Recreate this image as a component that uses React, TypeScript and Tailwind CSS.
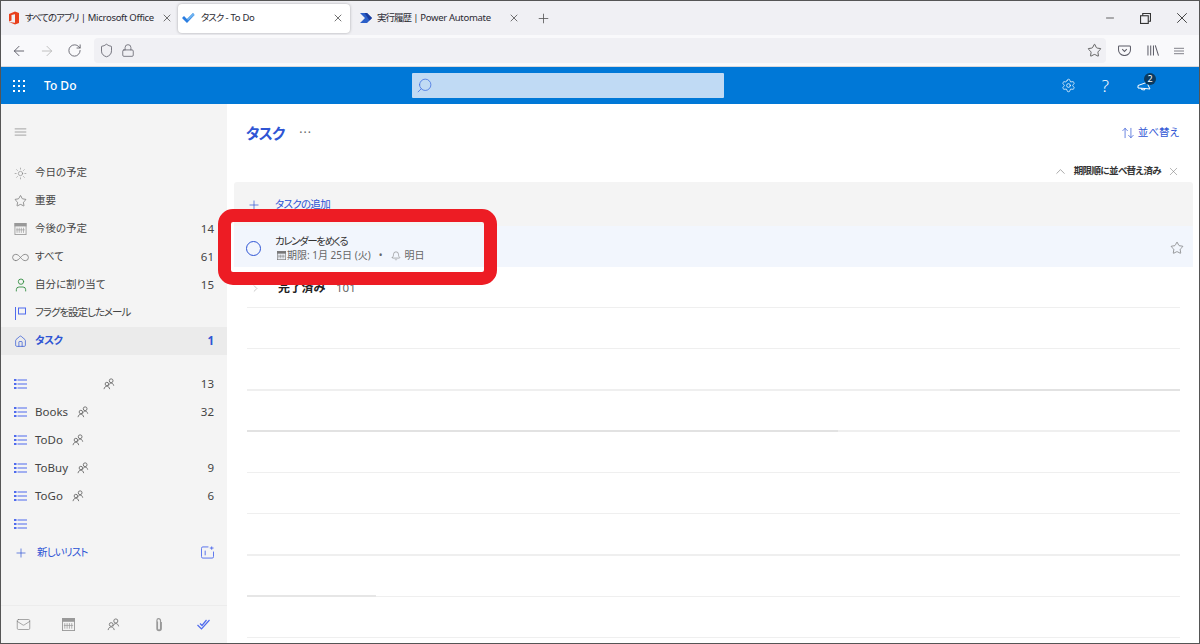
import { ArrowLeft, ArrowRight, RotateCw, Shield, Lock, Star, X, Plus, Minus, Sun, Home, User, Infinity as InfinityIcon, ChevronUp, ChevronRight, Bell, Settings, Mail, Search, ArrowUpDown } from "lucide-react"

const font = "[font-family:'Noto_Sans','Noto_Sans_CJK_JP',sans-serif] [font-feature-settings:'palt']"

function Calendar({ className = "" }: { className?: string }) {
  return (
    <svg viewBox="0 0 14 14" className={className} fill="none" stroke="currentColor">
      <rect x="0.5" y="0.5" width="13" height="13" />
      <rect x="0.5" y="0.5" width="13" height="3" fill="currentColor" />
      <path d="M3 5.5v6M5.5 5.5v6M8 5.5v6M10.5 5.5v6M2 8h10" strokeWidth="0.8" />
    </svg>
  )
}

function People({ className = "" }: { className?: string }) {
  return (
    <svg viewBox="0 0 14 14" className={className} fill="none" stroke="currentColor" strokeWidth="1">
      <circle cx="9.5" cy="3.2" r="2.2" />
      <path d="M6.5 9c.4-2 1.6-3 3-3s2.7 1 3 3" />
      <circle cx="4.5" cy="7" r="2" />
      <path d="M1.2 13c.3-2 1.6-3.4 3.3-3.4S7.5 11 7.8 13" />
    </svg>
  )
}

function Hamburger({ className = "" }: { className?: string }) {
  return (
    <svg viewBox="0 0 13 9" className={className} fill="none" stroke="currentColor">
      <path d="M0 1h13M0 4.5h13M0 8h13" />
    </svg>
  )
}

function ListIcon() {
  return (
    <svg viewBox="0 0 13 10" className="w-[13px] h-[10px] text-[#4f6bed]" stroke="currentColor" fill="currentColor">
      <rect x="0" y="0" width="2.5" height="2" stroke="none" />
      <rect x="0" y="4" width="2.5" height="2" stroke="none" />
      <rect x="0" y="8" width="2.5" height="2" stroke="none" />
      <path d="M3.5 1H13M3.5 5H13M3.5 9H13" strokeWidth="1" />
    </svg>
  )
}

function Tab({ icon, kana, title, active = false, className, textClass }: { icon: React.ReactNode; kana: string; title: string; active?: boolean; className: string; textClass: string }) {
  return (
    <div className={`${className} h-[29px] flex items-center rounded-[4px] ${active ? "bg-white shadow-[0_0_3px_rgba(0,0,0,0.3)]" : ""}`}>
      <span className="w-[14px] h-[14px] flex items-center justify-center shrink-0">{icon}</span>
      <span className={`${textClass} flex-1 text-[9.5px] tracking-[-0.3px] text-[#2b2a33] whitespace-nowrap`}>
        <span className="tracking-[-1px]">{kana}</span> {title}
      </span>
      <X className="w-[12px] h-[12px] text-[#444] shrink-0" strokeWidth={1.5} />
    </div>
  )
}

function NavRow({ icon, label, count, active = false, labelClass = "" }: { icon: React.ReactNode; label: string; count?: string; active?: boolean; labelClass?: string }) {
  return (
    <div className={`h-[28px] flex items-center pl-[13px] pr-[13px] ${active ? "bg-[#ebebeb]" : ""}`}>
      <span className="w-[13px] flex items-center justify-center shrink-0">{icon}</span>
      <span className={`ml-[8px] flex-1 text-[10.5px] whitespace-nowrap ${labelClass} ${active ? "font-bold text-[#2f55d4]" : "text-[#444]"}`}>{label}</span>
      {count && <span className={`text-[11.5px] ${active ? "font-bold text-[#2f55d4]" : "text-[#444]"}`}>{count}</span>}
    </div>
  )
}

function ListRow({ label, count, gap }: { label: string; count?: string; gap: string }) {
  return (
    <div className="h-[28px] flex items-center pl-[13px] pr-[13px]">
      <ListIcon />
      <span className="ml-[8px] text-[11.5px] text-[#444]">{label}</span>
      <People className={`w-[12px] h-[12px] text-[#666] ${gap}`} />
      <span className="flex-1" />
      {count && <span className="text-[11.5px] text-[#444]">{count}</span>}
    </div>
  )
}

function Line({ children }: { children?: React.ReactNode }) {
  return (
    <div className="h-[41.3px] flex items-end">
      {children ?? <span className="flex-1 h-[1.5px] bg-[#efefef]" />}
    </div>
  )
}

export default function App() {
  return (
    <div className={`${font} relative w-[1200px] h-[644px] overflow-hidden flex flex-col bg-white border border-[#555]`}>
      {/* browser tabs */}
      <div className="h-[34px] bg-[#f0f0f4] flex items-center shrink-0">
        <Tab
          className="w-[170px] ml-[6px] pr-[4px]"
          textClass="ml-[4px]"
          kana="すべてのアプリ"
          title="| Microsoft Office"
          icon={
            <svg viewBox="0 0 14 14" className="w-[14px] h-[14px]">
              <path d="M2 3l6-2.5 4 1.5v10l-4 1.5-6-2.5 6 .8V3.2L4.5 4v5.5L2 10.5z" fill="#e8401c" />
            </svg>
          }
        />
        <Tab
          active
          className="w-[172px] ml-[1px] pl-[3px] pr-[6px]"
          textClass="ml-[6px]"
          kana="タスク"
          title="- To Do"
          icon={
            <svg viewBox="0 0 14 14" className="w-[14px] h-[14px]">
              <path d="M1 7l2-2 3 3 6-6 1.5 2L6 12z" fill="#2a7de1" />
              <path d="M6 8l6-6 1.5 2L7 9.5z" fill="#6cb2f0" />
            </svg>
          }
        />
        <Tab
          className="w-[162px] ml-[9px] pr-[1px]"
          textClass="ml-[4px]"
          kana="実行履歴"
          title="| Power Automate"
          icon={
            <svg viewBox="0 0 14 14" className="w-[14px] h-[14px]">
              <path d="M1 2h7l5 5-5 5H1l5-5z" fill="#2b5fc8" />
              <path d="M8 2l5 5-2.5 2.5L5.5 2z" fill="#1a3c9c" />
            </svg>
          }
        />
        <Plus className="ml-[15px] w-[15px] h-[15px] text-[#555]" strokeWidth={1.3} />
        <span className="flex-1" />
        <div className="flex items-center pr-[8px] text-[#333]">
          <Minus className="w-[12px] h-[12px]" strokeWidth={1.5} />
          <svg viewBox="0 0 10 10" className="ml-[24px] w-[11px] h-[11px]" fill="none" stroke="currentColor">
            <rect x="0.5" y="2.5" width="7" height="7" />
            <path d="M2.5 2.5V0.5h7v7h-2" />
          </svg>
          <X className="ml-[22px] w-[18px] h-[18px]" strokeWidth={1.2} />
        </div>
      </div>

      {/* address bar */}
      <div className="h-[32px] bg-[#f9f9fb] flex items-center shrink-0 border-b border-[#d8d8dc]">
        <div className="flex items-center gap-[12px] pl-[10px] w-[93px]">
          <ArrowLeft className="w-[16px] h-[16px] text-[#5b5b66]" strokeWidth={1.4} />
          <ArrowRight className="w-[16px] h-[16px] text-[#bbb]" strokeWidth={1.4} />
          <RotateCw className="w-[15px] h-[15px] text-[#5b5b66]" strokeWidth={1.4} />
        </div>
        <div className="w-[1012px] h-[25px] bg-[#f0f0f4] rounded-[4px] flex items-center pl-[5px] gap-[7px]">
          <Shield className="w-[15px] h-[15px] text-[#5b5b66]" strokeWidth={1.3} />
          <Lock className="w-[14px] h-[15px] text-[#5b5b66]" strokeWidth={1.3} />
          <span className="flex-1" />
          <Star className="w-[15px] h-[15px] text-[#444] mr-[4px]" strokeWidth={1.3} />
        </div>
        <div className="flex items-center pl-[12px] text-[#5b5b66]">
          <svg viewBox="0 0 14 12" className="w-[13px] h-[11px]" fill="none" stroke="currentColor" strokeWidth="1.1">
            <path d="M1.5 1h11a1 1 0 0 1 1 1v3.5a6.5 6 0 0 1-13 0V2a1 1 0 0 1 .5-1z" />
            <path d="M4.5 4.5L7 7l2.5-2.5" />
          </svg>
          <svg viewBox="0 0 13 12" className="ml-[16px] w-[12px] h-[11px]" fill="none" stroke="currentColor" strokeWidth="1.1">
            <path d="M1 0.5v11M4 0.5v11M7 0.5v11M9 0.5l3.5 11" />
          </svg>
          <Hamburger className="ml-[15px] w-[10px] h-[8px]" />
        </div>
      </div>

      {/* app header */}
      <div className="h-[37px] bg-[#0078d7] flex items-center shrink-0 relative">
        <div className="w-[411px] flex items-center">
          <div className="ml-[12px] grid grid-cols-3 gap-[3px]">
            {Array.from({ length: 9 }).map((_, i) => (
              <span key={i} className="w-[2px] h-[2px] bg-white" />
            ))}
          </div>
          <span className="ml-[19px] text-[12px] font-medium text-white">To Do</span>
        </div>
        <div className="w-[312px] h-[25px] bg-[#c0daf4] rounded-[1px] flex items-center pl-[4px]">
          <Search className="w-[17px] h-[17px] text-[#3f6fe0] -scale-x-100" strokeWidth={1.1} />
        </div>
        <span className="flex-1" />
        <div className="flex items-center pr-[48px] text-white">
          <Settings className="w-[15px] h-[15px]" strokeWidth={1.2} />
          <span className="ml-[26px] text-[17px] font-light leading-none">?</span>
          <span className="ml-[28px] relative flex">
            <svg viewBox="0 0 14 10" className="w-[14px] h-[10px]" fill="none" stroke="currentColor">
              <path d="M1 4.5l10-3.5v3l2 4-5-.5-7-.5zM4 7l.5 1.5 3 .5L8 7.5" />
            </svg>
            <span className="absolute -top-[8px] left-[7px] w-[12px] h-[12px] rounded-full bg-[#0b3a5e] text-[9px] leading-[12px] text-center text-white">2</span>
          </span>
        </div>
      </div>

      {/* body */}
      <div className="flex-1 flex min-h-0">
        <aside className="w-[226px] bg-[#f4f4f4] flex flex-col shrink-0">
          <div className="h-[55px] pl-[13px] flex items-center">
            <Hamburger className="w-[13px] h-[8px] text-[#999]" />
          </div>
          <NavRow icon={<Sun className="w-[15px] h-[15px] text-[#777]" strokeWidth={1} />} label="今日の予定" />
          <NavRow icon={<Star className="w-[14px] h-[14px] text-[#555]" strokeWidth={1.1} />} label="重要" />
          <NavRow icon={<Calendar className="w-[13px] h-[12px] text-[#999]" />} label="今後の予定" count="14" />
          <NavRow icon={<InfinityIcon className="w-[19px] h-[19px] shrink-0 text-[#777]" strokeWidth={1} />} label="すべて" count="61" />
          <NavRow icon={<User className="w-[16px] h-[16px] shrink-0 text-[#2e8b3d]" strokeWidth={1.3} />} label="自分に割り当て" count="15" />
          <NavRow
            labelClass="tracking-[-1px]"
            icon={
              <svg viewBox="0 0 11 13" className="w-[11px] h-[13px] text-[#4f6bed]" fill="none" stroke="currentColor">
                <path d="M0.5 0v13" />
                <rect x="3.5" y="1" width="7" height="6" />
              </svg>
            }
            label="フラグを設定したメール"
          />
          <NavRow active labelClass="tracking-[-0.5px]" icon={<Home className="w-[13px] h-[13px] text-[#2f55d4]" strokeWidth={1.3} />} label="タスク" count="1" />
          <div className="h-[15px]" />
          <ListRow label="" count="13" gap="ml-[68px]" />
          <ListRow label="Books" count="32" gap="ml-[9px]" />
          <ListRow label="ToDo" gap="ml-[9px]" />
          <ListRow label="ToBuy" count="9" gap="ml-[9px]" />
          <ListRow label="ToGo" count="6" gap="ml-[9px]" />
          <div className="h-[27px] pl-[13px] flex items-center">
            <ListIcon />
          </div>
          <div className="h-[31px] flex items-center pl-[13px] pr-[13px]">
            <Plus className="w-[14px] h-[14px] text-[#2f55d4]" strokeWidth={1.2} />
            <span className="ml-[9px] flex-1 text-[10.5px] tracking-[-0.8px] text-[#2f55d4]">新しいリスト</span>
            <svg viewBox="0 0 14 14" className="w-[13px] h-[13px] text-[#4f6bed]" fill="none" stroke="currentColor">
              <path d="M8 1H2a1.5 1.5 0 0 0-1.5 1.5v9A1.5 1.5 0 0 0 2 13h10a1.5 1.5 0 0 0 1.5-1.5V6M4.5 5v5M11.5 0.5v3.5M9.5 2.2h4" />
            </svg>
          </div>
          <div className="flex-1" />
          <div className="h-[38px] border-t border-[#ececec] grid grid-cols-5 items-center justify-items-center text-[#777]">
            <Mail className="w-[15px] h-[15px]" strokeWidth={1} />
            <Calendar className="w-[13px] h-[13px] text-[#999]" />
            <People className="w-[13px] h-[13px]" />
            <svg viewBox="0 0 8 14" className="w-[8px] h-[14px] text-[#999]" fill="none" stroke="currentColor" strokeWidth="1.2">
              <path d="M2.5 3.5v7a1.5 1.5 0 0 0 3 0V2.5a1.8 1.8 0 0 0-3.6 0v8a2.2 2.2 0 0 0 4.4 0V4" />
            </svg>
            <svg viewBox="0 0 14 11" className="w-[14px] h-[11px] text-[#4f6bed]" fill="none" stroke="currentColor" strokeWidth="1.2">
              <path d="M0.5 6l4 4 8-9M3 4.5L5 6.5l4.5-5.5" />
            </svg>
          </div>
        </aside>

        <main className="flex-1 flex flex-col pl-[7px] pr-[6px]">
          <div className="h-[57px] flex items-center pl-[12px] pr-[14px] pt-[1px]">
            <span className="text-[15px] font-bold tracking-[-1px] text-[#2f55d4]">タスク</span>
            <span className="ml-[15px] text-[12px] text-[#666] tracking-[1px]">···</span>
            <span className="flex-1" />
            <ArrowUpDown className="w-[14px] h-[14px] text-[#2f55d4]" strokeWidth={1.2} />
            <span className="ml-[3px] text-[10.5px] text-[#2f55d4]">並べ替え</span>
          </div>
          <div className="h-[21px] flex items-center justify-end pr-[13px]">
            <ChevronUp className="w-[15px] h-[15px] text-[#777]" strokeWidth={1} />
            <span className="ml-[6px] text-[9.5px] font-bold tracking-[-0.6px] text-[#333]">期限順に並べ替え済み</span>
            <X className="ml-[6px] w-[13px] h-[13px] text-[#777]" strokeWidth={1} />
          </div>
          <div className="h-[44px] bg-[#f4f4f4] rounded-t-[3px] flex items-center pl-[13px] pt-[1px] shrink-0">
            <Plus className="w-[14px] h-[14px] text-[#2f55d4]" strokeWidth={1.2} />
            <span className="ml-[14px] text-[10.5px] tracking-[-0.7px] text-[#2f55d4]">タスクの追加</span>
          </div>
          <div className="h-[41px] bg-[#f2f6fd] flex items-center pl-[12px] pr-[9px] pt-[3px] shrink-0">
            <span className="w-[15px] h-[15px] rounded-full border border-[#2f55d4]" />
            <div className="ml-[14px] flex-1 flex flex-col">
              <span className="text-[10.5px] leading-[15px] tracking-[-1.4px] text-[#333]">カレンダーをめくる</span>
              <div className="flex items-center text-[10px] leading-[13px] text-[#666]">
                <Calendar className="w-[9px] h-[9px] ml-[2px] text-[#777]" />
                <span className="ml-[1px]">期限: 1月 25日 (火)</span>
                <span className="ml-[8px] mr-[9px]">•</span>
                <Bell className="w-[10px] h-[10px]" strokeWidth={1.2} />
                <span className="ml-[3px]">明日</span>
              </div>
            </div>
            <Star className="w-[14px] h-[14px] text-[#666]" strokeWidth={1.1} />
          </div>
          <div className="pl-[13px] pr-[13px] shrink-0">
            <div className="h-[41px] flex items-center pl-[3px] pt-[2px] border-b-[1.5px] border-[#efefef]">
              <ChevronRight className="w-[11px] h-[11px] text-[#888]" strokeWidth={1} />
              <span className="ml-[17px] text-[12px] font-bold tracking-[-0.2px] text-[#222]">完了済み</span>
              <span className="ml-[11px] text-[11.5px] text-[#666]">101</span>
            </div>
            <Line />
            <Line>
              <span className="flex-1 h-[1.5px] bg-[#efefef]" />
              <span className="w-[230px] h-[1.5px] bg-[#e2e2e2]" />
            </Line>
            <Line>
              <span className="w-[591px] h-[2px] bg-[#e2e2e2]" />
              <span className="flex-1 h-[1.5px] bg-[#efefef]" />
            </Line>
            <Line />
            <Line />
            <Line />
            <Line>
              <span className="w-[129px] h-[2px] bg-[#e6e6e6]" />
              <span className="flex-1 h-[1.5px] bg-[#efefef]" />
            </Line>
            <Line />
          </div>
        </main>
      </div>

      {/* red annotation */}
      <div className="absolute left-[217px] top-[208px] w-[279px] h-[76px] border-[13px] border-[#ed1c24] rounded-[15px]" />
    </div>
  )
}
